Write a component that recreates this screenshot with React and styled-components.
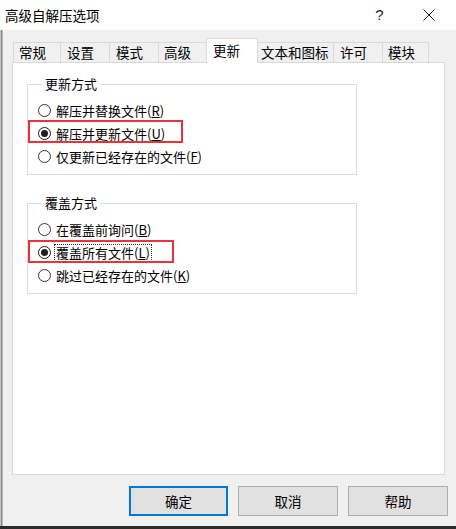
import React from "react";
import styled, { createGlobalStyle } from "styled-components";

const Global = createGlobalStyle`
  html, body { margin: 0; padding: 0; background: #f0f0f0; }
  body { font-family: "Noto Sans CJK SC", "Liberation Sans", sans-serif; }
  #root { width: 456px; height: 529px; }
`;

const Window = styled.div`
  width: 456px;
  height: 529px;
  display: flex;
  flex-direction: column;
  background: #f0f0f0;
  overflow: hidden;
  color: #000;
  font-family: "Noto Sans CJK SC", "Liberation Sans", sans-serif;
`;

const TitleBar = styled.div`
  flex: none;
  height: 30px;
  background: #fff;
  display: flex;
  align-items: center;
  padding-left: 5px;
`;

const Title = styled.div`
  flex: 1;
  font-size: 13.5px;
  line-height: 18px;
  color: #000;
`;

const HelpGlyph = styled.span`
  width: 11px;
  margin-right: 38px;
  text-align: center;
  font-family: "Liberation Sans", sans-serif;
  font-size: 15px;
  line-height: 18px;
  color: #1e1e1e;
`;

const CloseIcon = styled.svg`
  width: 12px;
  height: 12px;
  margin-right: 21px;
  display: block;
`;

const Frame = styled.div`
  flex: 1;
  display: flex;
  min-height: 0;
`;

const LeftEdge = styled.div`
  flex: none;
  width: 3px;
  background: linear-gradient(
    to right,
    #c4c4c4 0 1px,
    #8a8a8a 1px 2px,
    #b8b8b8 2px 3px
  );
`;

const Client = styled.div`
  flex: 1;
  display: flex;
  flex-direction: column;
  padding: 8px 8px 0 9px;
`;

const TabStrip = styled.div`
  display: flex;
  align-items: flex-end;
  height: 25px;
  padding-left: 1px;
  margin-bottom: -1px;
`;

const Tab = styled.div`
  box-sizing: border-box;
  width: ${(p) => p.$w}px;
  height: ${(p) => (p.$active ? 25 : 21)}px;
  margin-right: -1px;
  padding-left: ${(p) => p.$pad}px;
  border: 1px solid #d9d9d9;
  border-bottom: none;
  background: ${(p) => (p.$active ? "#fff" : "#f0f0f0")};
  font-size: 13.5px;
  line-height: ${(p) => (p.$active ? 22 : 19)}px;
  white-space: nowrap;
  position: relative;
  z-index: ${(p) => (p.$active ? 2 : 0)};
`;

const Panel = styled.div`
  box-sizing: border-box;
  height: 413px;
  margin-right: 3px;
  background: #fff;
  border: 1px solid #d9d9d9;
  padding: 13px 0 0 14px;
  display: flex;
  flex-direction: column;
  gap: 20px;
  position: relative;
  z-index: 1;
`;

const Group = styled.fieldset`
  box-sizing: border-box;
  width: 330px;
  margin: 0;
  min-width: 0;
  border: 1px solid #dcdcdc;
  padding: 7px 0 6px 10px;
`;

const Legend = styled.legend`
  margin-left: 4px;
  padding: 0 3px;
  font-size: 13px;
  line-height: 16px;
`;

const OptionRow = styled.div`
  position: relative;
  display: flex;
  align-items: center;
  height: 23px;
  font-size: 13px;
  line-height: 16px;

  ${(p) =>
    p.$mark
      ? `
    &::before {
      content: "";
      position: absolute;
      left: -10px;
      top: ${p.$markTop}px;
      width: ${p.$mark}px;
      height: 23px;
      box-sizing: border-box;
      border: 2px solid #e8333b;
      pointer-events: none;
    }
  `
      : ""}
`;

const Radio = styled.span`
  box-sizing: border-box;
  flex: none;
  width: 13px;
  height: 13px;
  border-radius: 50%;
  border: 1px solid ${(p) => (p.$checked ? "#1a1a1a" : "#333")};
  background: #fff;
  display: grid;
  place-items: center;

  &::after {
    content: "";
    width: 7px;
    height: 7px;
    border-radius: 50%;
    background: ${(p) => (p.$checked ? "#1f1f1f" : "transparent")};
  }
`;

const OptionText = styled.span`
  margin-left: ${(p) => (p.$focus ? 4 : 5)}px;
  padding: 0 ${(p) => (p.$focus ? 1 : 0)}px;
  outline: ${(p) => (p.$focus ? "1px dotted #333" : "none")};
  white-space: nowrap;

  u {
    text-underline-offset: 1px;
  }
`;

const ButtonRow = styled.div`
  display: flex;
  justify-content: flex-end;
  gap: 10px;
  margin-top: 11px;
`;

const DialogButton = styled.div`
  box-sizing: border-box;
  width: ${(p) => p.$w}px;
  height: 30px;
  display: flex;
  align-items: center;
  justify-content: center;
  background: #e1e1e1;
  border: ${(p) => (p.$primary ? "2px solid #0078d7" : "1px solid #adadad")};
  font-size: 13.5px;
  line-height: 18px;
  color: #000;
`;

const BottomEdge = styled.div`
  flex: none;
  height: 3px;
  background: #2b2b2b;
`;

const tabs = [
  { label: "常规", w: 48, pad: 5 },
  { label: "设置", w: 50, pad: 6 },
  { label: "模式", w: 50, pad: 6 },
  { label: "高级", w: 49, pad: 5 },
  { label: "更新", w: 52, pad: 6, active: true },
  { label: "文本和图标", w: 77, pad: 3 },
  { label: "许可", w: 50, pad: 6 },
  { label: "模块", w: 47, pad: 5 },
];

const groups = [
  {
    legend: "更新方式",
    options: [
      { text: "解压并替换文件", key: "R" },
      { text: "解压并更新文件", key: "U", checked: true, mark: 155, markTop: -2 },
      { text: "仅更新已经存在的文件", key: "F" },
    ],
  },
  {
    legend: "覆盖方式",
    options: [
      { text: "在覆盖前询问", key: "B" },
      { text: "覆盖所有文件", key: "L", checked: true, focus: true, mark: 146, markTop: -1 },
      { text: "跳过已经存在的文件", key: "K" },
    ],
  },
];

export default function App() {
  return (
    <>
      <Global />
      <Window>
        <TitleBar>
          <Title>高级自解压选项</Title>
          <HelpGlyph>?</HelpGlyph>
          <CloseIcon viewBox="0 0 12 12">
            <path d="M0.5 0.5 L11.5 11.5 M11.5 0.5 L0.5 11.5" stroke="#1e1e1e" strokeWidth="1" fill="none" />
          </CloseIcon>
        </TitleBar>
        <Frame>
          <LeftEdge />
          <Client>
            <TabStrip>
              {tabs.map((t) => (
                <Tab key={t.label} $w={t.w} $pad={t.pad} $active={t.active}>
                  {t.label}
                </Tab>
              ))}
            </TabStrip>
            <Panel>
              {groups.map((g) => (
                <Group key={g.legend}>
                  <Legend>{g.legend}</Legend>
                  {g.options.map((o) => (
                    <OptionRow key={o.key} $mark={o.mark} $markTop={o.markTop}>
                      <Radio $checked={o.checked} />
                      <OptionText $focus={o.focus}>
                        {o.text}(<u>{o.key}</u>)
                      </OptionText>
                    </OptionRow>
                  ))}
                </Group>
              ))}
            </Panel>
            <ButtonRow>
              <DialogButton $primary $w={99}>确定</DialogButton>
              <DialogButton $w={100}>取消</DialogButton>
              <DialogButton $w={100}>帮助</DialogButton>
            </ButtonRow>
          </Client>
        </Frame>
        <BottomEdge />
      </Window>
    </>
  );
}
